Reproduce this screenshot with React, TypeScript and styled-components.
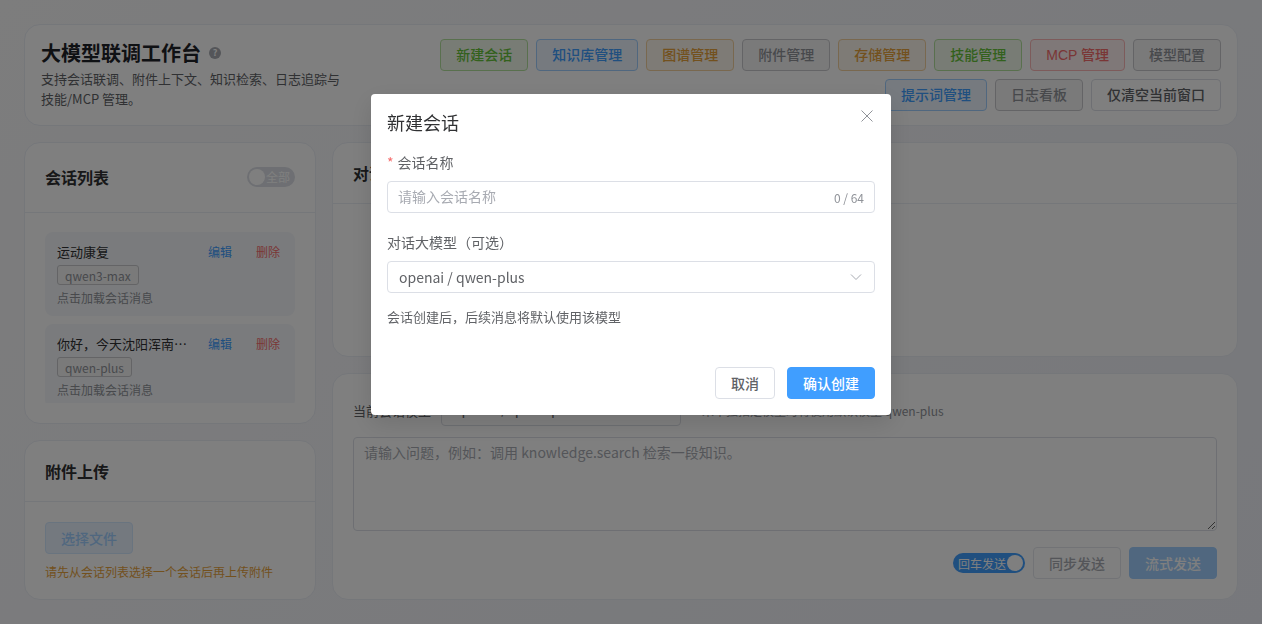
import styled, { createGlobalStyle } from "styled-components";

const GlobalStyle = createGlobalStyle`
  * { box-sizing: border-box; }
  html, body { margin: 0; height: 100%; overflow: hidden; }
  body {
    font-family: "Noto Sans CJK SC", "Noto Sans", sans-serif;
    color: #303133;
  }
`;

const Page = styled.div`
  height: 624px;
  padding: 24px;
  display: flex;
  flex-direction: column;
  gap: 16px;
  background: linear-gradient(135deg, #fafafb 0%, #eff1f8 100%);
`;

const Card = styled.section`
  background: #fff;
  border: 1px solid #ebeef5;
  border-radius: 16px;
  overflow: hidden;
`;

const Header = styled(Card)`
  height: 102px;
  flex: none;
  padding: 14px 16px 0;
  display: flex;
  justify-content: space-between;
`;

const TitleBlock = styled.div`
  width: 310px;
`;

const TitleRow = styled.div`
  display: flex;
  align-items: center;
  gap: 8px;
  height: 28px;
`;

const Title = styled.h1`
  margin: 0;
  font-size: 20px;
  line-height: 28px;
  font-weight: 600;
  color: #1f2329;
`;

const Help = styled.span`
  width: 12px;
  height: 12px;
  border-radius: 50%;
  background: #a8abb2;
  color: #fff;
  font-size: 9px;
  line-height: 12px;
  font-weight: 700;
  text-align: center;
`;

const Subtitle = styled.p`
  margin: 2px 0 0;
  font-size: 13px;
  line-height: 20px;
  color: #606266;
`;

const Actions = styled.div`
  width: 790px;
  display: flex;
  flex-wrap: wrap;
  justify-content: flex-end;
  align-content: flex-start;
  gap: 8px;
`;

const tones = {
  green: { color: "#67c23a", bg: "#f0f9eb", line: "#b3e19d" },
  blue: { color: "#409eff", bg: "#ecf5ff", line: "#a0cfff" },
  orange: { color: "#e6a23c", bg: "#fdf6ec", line: "#f3d19e" },
  gray: { color: "#909399", bg: "#f4f4f5", line: "#c8c9cc" },
  red: { color: "#f56c6c", bg: "#fef0f0", line: "#fab6b6" },
  plain: { color: "#606266", bg: "#fff", line: "#dcdfe6" },
};

const ActionButton = styled.button<{ $tone: keyof typeof tones }>`
  height: 32px;
  padding: 0 15px;
  border-radius: 4px;
  border: 1px solid ${(props) => tones[props.$tone].line};
  background: ${(props) => tones[props.$tone].bg};
  color: ${(props) => tones[props.$tone].color};
  font-family: "Liberation Sans", "Noto Sans CJK SC", sans-serif;
  font-size: 14px;
  font-weight: 500;
  line-height: 1;
`;

const Columns = styled.div`
  flex: 1;
  min-height: 0;
  display: grid;
  grid-template-columns: 292px 1fr;
  gap: 16px;
`;

const Column = styled.div`
  display: flex;
  flex-direction: column;
  gap: 16px;
  min-height: 0;
`;

const CardHead = styled.div`
  height: 61px;
  padding: 0 20px;
  display: flex;
  align-items: center;
  justify-content: space-between;
  border-bottom: 1px solid #ebeef5;
  font-size: 16px;
  font-weight: 600;
  color: #303133;
`;

const SessionsHead = styled(CardHead)`
  height: 70px;
  padding-bottom: 2px;
`;

const SessionsCard = styled(Card)`
  height: 282px;
  flex: none;
`;

const SessionList = styled.div`
  height: 171px;
  margin-top: 19px;
  padding: 0 20px;
  overflow: hidden;
  display: flex;
  flex-direction: column;
  gap: 8px;
`;

const Session = styled.div`
  flex: none;
  height: 84px;
  padding: 8px 12px 0;
  border-radius: 8px;
  background: #f5f7fa;
`;

const SessionTop = styled.div`
  display: flex;
  align-items: center;
  height: 22px;
  margin-bottom: 3px;
  font-size: 13px;
  color: #303133;
`;

const SessionName = styled.span`
  flex: none;
  width: 135px;
  margin-right: 16px;
  white-space: nowrap;
  overflow: hidden;
  text-overflow: ellipsis;
`;

const LinkText = styled.span<{ $danger?: boolean }>`
  flex: none;
  width: 24px;
  white-space: nowrap;
  font-size: 12px;
  color: ${(props) => (props.$danger ? "#f56c6c" : "#409eff")};
  margin-right: 24px;
  &:last-child {
    margin-right: 0;
  }
`;

const Tag = styled.div`
  display: flex;
  align-items: center;
  width: fit-content;
  height: 20px;
  padding: 0 7px;
  border: 1px solid #c8c9cc;
  border-radius: 3px;
  background: #f4f4f5;
  color: #909399;
  font-size: 12px;
`;

const Hint = styled.div`
  margin-top: 2px;
  font-size: 12px;
  line-height: 22px;
  color: #909399;
`;

const Switch = styled.span<{ $on?: boolean }>`
  display: inline-flex;
  align-items: center;
  height: 20px;
  padding: ${(props) => (props.$on ? "0 2px 0 5px" : "0 5px 0 2px")};
  gap: 1px;
  border-radius: 10px;
  background: ${(props) => (props.$on ? "#409eff" : "#dcdfe6")};
  color: #fff;
  font-size: 12px;
  font-weight: 400;
  &::after {
    content: "";
    width: 16px;
    height: 16px;
    border-radius: 50%;
    background: #fff;
    order: ${(props) => (props.$on ? 1 : -1)};
  }
`;

const UploadCard = styled(Card)`
  flex: 1;
`;

const UploadBody = styled.div`
  padding: 20px;
`;

const SelectFile = styled.button`
  display: block;
  width: 88px;
  height: 32px;
  border-radius: 4px;
  border: 1px solid #d3e8ff;
  background: #e8f3ff;
  color: #a0cfff;
  font-family: inherit;
  font-size: 14px;
  font-weight: 500;
`;

const Warn = styled.div`
  margin-top: 9px;
  font-size: 12px;
  line-height: 18px;
  color: #e6a23c;
`;

const ChatCard = styled(Card)`
  flex: none;
  height: 215px;
`;

const ComposerCard = styled(Card)`
  flex: 1;
  padding: 20px;
`;

const ModelRow = styled.div`
  display: flex;
  align-items: center;
  gap: 10px;
  height: 32px;
  margin-bottom: 11px;
  font-size: 13px;
  color: #606266;
`;

const ModelPick = styled.div`
  width: 240px;
  height: 32px;
  padding: 0 11px 4px;
  display: flex;
  align-items: center;
  border: 1px solid #dcdfe6;
  border-radius: 4px;
  flex: none;
  font-size: 14px;
`;

const ModelNote = styled.span`
  margin-left: 11px;
  font-size: 12px;
  color: #909399;
  white-space: nowrap;
`;

const Prompt = styled.textarea`
  display: block;
  width: 100%;
  height: 94px;
  padding: 3px 10px;
  border: 1px solid #dcdfe6;
  border-radius: 4px;
  font-family: inherit;
  font-size: 14px;
  line-height: 22px;
  outline: none;
  &::placeholder { color: #a8abb2; }
`;

const SendRow = styled.div`
  display: flex;
  justify-content: flex-end;
  align-items: center;
  gap: 8px;
  margin-top: 16px;
`;

const Mask = styled.div`
  position: fixed;
  inset: 0;
  background: rgba(0, 0, 0, 0.5);
`;

const Dialog = styled.div`
  position: fixed;
  left: 371px;
  top: 94px;
  width: 520px;
  height: 321px;
  padding: 15px 16px 16px;
  background: #fff;
  border-radius: 4px;
  box-shadow: 0 8px 24px rgba(0, 0, 0, 0.12);
`;

const DialogTitle = styled.h2`
  margin: 0;
  font-size: 18px;
  line-height: 26px;
  font-weight: 400;
  color: #303133;
`;

const Close = styled.svg`
  position: absolute;
  top: 15px;
  right: 17px;
  width: 14px;
  height: 14px;
  stroke: #909399;
  stroke-width: 1;
  fill: none;
`;

const FieldLabel = styled.label<{ $required?: boolean }>`
  display: block;
  font-size: 14px;
  line-height: 22px;
  color: #606266;
  &::before {
    content: ${(props) => (props.$required ? '"*"' : "none")};
    color: #f56c6c;
    margin-right: 4px;
  }
`;

const NameLabel = styled(FieldLabel)`
  margin-top: 16px;
  margin-bottom: 8px;
`;

const ModelLabel = styled(FieldLabel)`
  margin-top: 18px;
  margin-bottom: 8px;
`;

const InputBox = styled.div`
  height: 32px;
  padding: 0 10px 0 11px;
  display: flex;
  align-items: center;
  justify-content: space-between;
  border: 1px solid #dcdfe6;
  border-radius: 4px;
  font-size: 14px;
  color: #606266;
`;

const Placeholder = styled.span`
  margin: 0 0 2px -1px;
  color: #a8abb2;
`;

const Count = styled.span`
  font-size: 12px;
  color: #909399;
`;

const Chevron = styled.svg`
  width: 14px;
  height: 14px;
  margin-right: 1px;
  stroke: #a8abb2;
  stroke-width: 1;
  fill: none;
`;

const Note = styled.p`
  margin: 15px 0 0;
  font-size: 13px;
  line-height: 18px;
  color: #606266;
`;

const DialogFoot = styled.div`
  position: absolute;
  right: 16px;
  bottom: 16px;
  display: flex;
  gap: 12px;
`;

const FootButton = styled.button<{ $primary?: boolean }>`
  height: 32px;
  padding: 0 15px;
  border-radius: 4px;
  border: 1px solid ${(props) => (props.$primary ? "#409eff" : "#dcdfe6")};
  background: ${(props) => (props.$primary ? "#409eff" : "#fff")};
  color: ${(props) => (props.$primary ? "#fff" : "#606266")};
  font-family: inherit;
  font-size: 14px;
  font-weight: 500;
`;

const DisabledSend = styled(FootButton)`
  border-color: ${(props) => (props.$primary ? "#a0cfff" : "#e4e7ed")};
  background: ${(props) => (props.$primary ? "#a0cfff" : "#fff")};
  color: ${(props) => (props.$primary ? "#fff" : "#a8abb2")};
`;

const sessions = [
  { name: "运动康复", model: "qwen3-max" },
  { name: "你好，今天沈阳浑南的天气怎么样", model: "qwen-plus" },
];

function App() {
  return (
    <>
      <GlobalStyle />
      <Page>
        <Header>
          <TitleBlock>
            <TitleRow>
              <Title>大模型联调工作台</Title>
              <Help>?</Help>
            </TitleRow>
            <Subtitle>支持会话联调、附件上下文、知识检索、日志追踪与技能/MCP 管理。</Subtitle>
          </TitleBlock>
          <Actions>
            <ActionButton $tone="green">新建会话</ActionButton>
            <ActionButton $tone="blue">知识库管理</ActionButton>
            <ActionButton $tone="orange">图谱管理</ActionButton>
            <ActionButton $tone="gray">附件管理</ActionButton>
            <ActionButton $tone="orange">存储管理</ActionButton>
            <ActionButton $tone="green">技能管理</ActionButton>
            <ActionButton $tone="red">MCP 管理</ActionButton>
            <ActionButton $tone="gray">模型配置</ActionButton>
            <ActionButton $tone="blue">提示词管理</ActionButton>
            <ActionButton $tone="gray">日志看板</ActionButton>
            <ActionButton $tone="plain">仅清空当前窗口</ActionButton>
          </Actions>
        </Header>
        <Columns>
          <Column>
            <SessionsCard>
              <SessionsHead>
                会话列表
                <Switch>全部</Switch>
              </SessionsHead>
              <SessionList>
                {sessions.map((session) => (
                  <Session key={session.name}>
                    <SessionTop>
                      <SessionName>{session.name}</SessionName>
                      <LinkText>编辑</LinkText>
                      <LinkText $danger>删除</LinkText>
                    </SessionTop>
                    <Tag>{session.model}</Tag>
                    <Hint>点击加载会话消息</Hint>
                  </Session>
                ))}
              </SessionList>
            </SessionsCard>
            <UploadCard>
              <CardHead>附件上传</CardHead>
              <UploadBody>
                <SelectFile>选择文件</SelectFile>
                <Warn>请先从会话列表选择一个会话后再上传附件</Warn>
              </UploadBody>
            </UploadCard>
          </Column>
          <Column>
            <ChatCard>
              <CardHead>对话窗口</CardHead>
            </ChatCard>
            <ComposerCard>
              <ModelRow>
                当前会话模型
                <ModelPick>openai / qwen-plus</ModelPick>
                <ModelNote>未单独指定模型时将使用默认模型 qwen-plus</ModelNote>
              </ModelRow>
              <Prompt placeholder="请输入问题，例如：调用 knowledge.search 检索一段知识。" />
              <SendRow>
                <Switch $on>回车发送</Switch>
                <DisabledSend>同步发送</DisabledSend>
                <DisabledSend $primary>流式发送</DisabledSend>
              </SendRow>
            </ComposerCard>
          </Column>
        </Columns>
      </Page>
      <Mask />
      <Dialog>
        <DialogTitle>新建会话</DialogTitle>
        <Close viewBox="0 0 14 14">
          <path d="M1.5 1.5l11 11M12.5 1.5l-11 11" />
        </Close>
        <NameLabel $required>会话名称</NameLabel>
        <InputBox>
          <Placeholder>请输入会话名称</Placeholder>
          <Count>0 / 64</Count>
        </InputBox>
        <ModelLabel>对话大模型（可选）</ModelLabel>
        <InputBox>
          openai / qwen-plus
          <Chevron viewBox="0 0 14 14">
            <path d="M2 4.5l5 5 5-5" />
          </Chevron>
        </InputBox>
        <Note>会话创建后，后续消息将默认使用该模型</Note>
        <DialogFoot>
          <FootButton>取消</FootButton>
          <FootButton $primary>确认创建</FootButton>
        </DialogFoot>
      </Dialog>
    </>
  );
}

export default App;
